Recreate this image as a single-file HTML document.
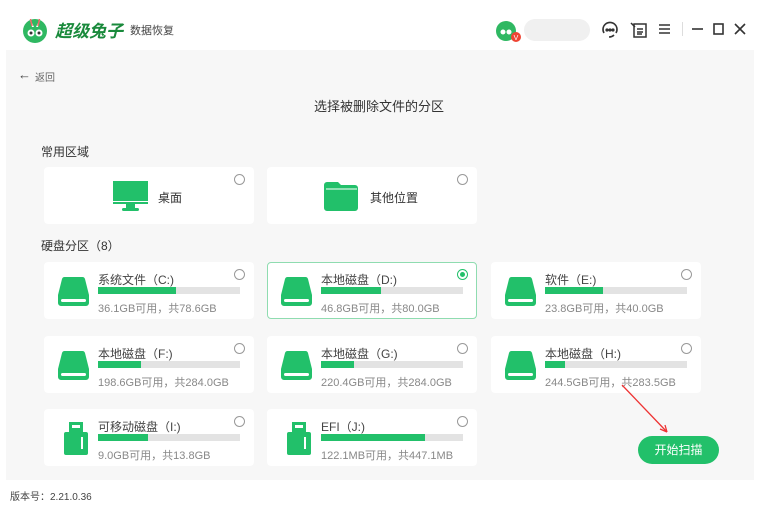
<!DOCTYPE html>
<html><head><meta charset="utf-8"><style>
*{margin:0;padding:0;box-sizing:border-box}
body{width:759px;height:522px;background:#fff;font-family:"Liberation Sans","Noto Sans CJK SC",sans-serif;position:relative;overflow:hidden;color:#333}
.abs{position:absolute}
.panel{position:absolute;left:6px;top:50px;width:748px;height:430px;background:#f7f7f7}
.card{position:absolute;width:210px;height:57px;background:#fff;border-radius:4px}
.card.sel{border:1px solid #8fdcb0}
.radio{position:absolute;right:9px;top:7px;width:11px;height:11px;border:1px solid #999;border-radius:50%}
.sel .radio{border-color:#22c06a}
.sel .radio:after{content:"";position:absolute;left:2px;top:2px;width:5px;height:5px;border-radius:50%;background:#22c06a}
.nm{position:absolute;left:54px;top:9px;font-size:12px;color:#444}
.bar{position:absolute;left:54px;top:25px;width:142px;height:7px;background:#e3e3e3}
.bar i{display:block;height:100%;background:#22c06a}
.sz{position:absolute;left:54px;top:38px;font-size:11px;color:#888}
.ic{position:absolute;left:13px;top:15px}
</style></head><body>
<svg class="abs" style="left:20px;top:14px" width="30" height="30" viewBox="0 0 30 30"><circle cx="15" cy="17" r="12" fill="#2fb862"/><path d="M9 3 L12 13 L14 13 Z M21 3 L18 13 L16 13Z" fill="#fff"/><path d="M10.5 5 L12 12 M19.5 5 L18 12" stroke="#e66" stroke-width="1.5"/><circle cx="11" cy="19" r="3.5" fill="#fff"/><circle cx="19" cy="19" r="3.5" fill="#fff"/><circle cx="11" cy="19" r="1.5" fill="#333"/><circle cx="19" cy="19" r="1.5" fill="#333"/></svg>
<div class="abs" style="left:55px;top:17px;font-size:17px;font-weight:bold;color:#1a8a3c;font-style:italic">超级兔子</div>
<div class="abs" style="left:130px;top:22px;font-size:11px;color:#444">数据恢复</div>
<svg class="abs" style="left:495px;top:19px" width="28" height="24" viewBox="0 0 28 24"><circle cx="11" cy="12" r="10" fill="#2fb862"/><circle cx="8" cy="13" r="2.5" fill="#fff"/><circle cx="14" cy="13" r="2.5" fill="#fff"/><circle cx="21" cy="18" r="5" fill="#e43"/><text x="21" y="21" font-size="7" fill="#fff" text-anchor="middle" font-family="Liberation Sans">V</text></svg>
<div class="abs" style="left:524px;top:19px;width:66px;height:22px;background:#f0f0f0;border-radius:11px"></div>
<svg class="abs" style="left:600px;top:20px;" width="20" height="20" viewBox="0 0 20 20" fill="none" stroke="#333" stroke-width="1.6"><path d="M4 13 A7 7 0 1 1 16 13"/><circle cx="7" cy="10" r=".8" fill="#333"/><circle cx="10" cy="10" r=".8" fill="#333"/><circle cx="13" cy="10" r=".8" fill="#333"/><path d="M14 15 Q12 17 9 17"/></svg>
<svg class="abs" style="left:629px;top:20px;" width="20" height="20" viewBox="0 0 20 20" fill="none" stroke="#333" stroke-width="1.5"><rect x="5" y="4" width="12" height="13"/><path d="M2 3 L6 7 M8 9h6M8 12h6M8 14h5"/></svg>
<svg class="abs" style="left:657px;top:21px;" width="16" height="16" viewBox="0 0 16 16" stroke="#333" stroke-width="1.5"><path d="M2 4h11M2 8h11M2 12h11"/></svg>
<div class="abs" style="left:682px;top:22px;width:1px;height:14px;background:#ddd"></div>
<svg class="abs" style="left:690px;top:20px;" width="60" height="18" viewBox="0 0 60 18" fill="none" stroke="#333" stroke-width="1.6"><path d="M2 9h11"/><rect x="24" y="4" width="9" height="10"/><path d="M45 4l10 10M55 4L45 14"/></svg>
<div class="panel"></div>
<div class="abs" style="left:18px;top:67px;font-size:13px;color:#444">&#8592;</div>
<div class="abs" style="left:35px;top:69px;font-size:10px;color:#666">返回</div>
<div class="abs" style="left:314px;top:96px;font-size:13px;color:#333">选择被删除文件的分区</div>
<div class="abs" style="left:41px;top:143px;font-size:12px;color:#333">常用区域</div>
<div class="card" style="left:44px;top:167px"><svg class="abs" style="left:69px;top:14px" width="36" height="31" viewBox="0 0 36 31"><rect x="0" y="0" width="35" height="23" fill="#22c06a"/><rect x="0" y="20" width="35" height="1" fill="#fff"/><rect x="13" y="23" width="9" height="4" fill="#22c06a"/><rect x="9" y="27" width="17" height="3" rx="1.5" fill="#22c06a"/></svg><div class="abs" style="left:114px;top:22px;font-size:12px">桌面</div><div class="radio"></div></div>
<div class="card" style="left:267px;top:167px"><svg class="abs" style="left:57px;top:13px" width="36" height="31" viewBox="0 0 36 31"><path d="M3 2h11l3 3h14a3 3 0 0 1 3 3v20a3 3 0 0 1-3 3H3a3 3 0 0 1-3-3V5a3 3 0 0 1 3-3z" fill="#22c06a"/><path d="M2 9h31" stroke="#fff" stroke-width="1"/></svg><div class="abs" style="left:103px;top:22px;font-size:12px">其他位置</div><div class="radio"></div></div>
<div class="abs" style="left:41px;top:237px;font-size:12px;color:#333">硬盘分区（8）</div>

<div class="card" style="left:44px;top:262px"><svg class="ic" width="33" height="29" viewBox="0 0 33 29"><path d="M8 0h17a3 3 0 0 1 3 2l4 16v8a3 3 0 0 1-3 3H4a3 3 0 0 1-3-3v-8l4-16a3 3 0 0 1 3-2z" fill="#22c06a"/><rect x="4" y="22" width="25" height="3" rx="1.5" fill="#fff"/></svg><div class="nm">系统文件（C:)</div><div class="bar"><i style="width:55%"></i></div><div class="sz">36.1GB可用，共78.6GB</div><div class="radio"></div></div>
<div class="card sel" style="left:267px;top:262px"><svg class="ic" style="left:12px;top:14px" width="33" height="29" viewBox="0 0 33 29"><path d="M8 0h17a3 3 0 0 1 3 2l4 16v8a3 3 0 0 1-3 3H4a3 3 0 0 1-3-3v-8l4-16a3 3 0 0 1 3-2z" fill="#22c06a"/><rect x="4" y="22" width="25" height="3" rx="1.5" fill="#fff"/></svg><div class="nm" style="left:53px;top:8px">本地磁盘（D:)</div><div class="bar" style="left:53px;top:24px"><i style="width:42%"></i></div><div class="sz" style="left:53px;top:37px">46.8GB可用，共80.0GB</div><div class="radio" style="right:8px;top:6px"></div></div>
<div class="card" style="left:491px;top:262px"><svg class="ic" width="33" height="29" viewBox="0 0 33 29"><path d="M8 0h17a3 3 0 0 1 3 2l4 16v8a3 3 0 0 1-3 3H4a3 3 0 0 1-3-3v-8l4-16a3 3 0 0 1 3-2z" fill="#22c06a"/><rect x="4" y="22" width="25" height="3" rx="1.5" fill="#fff"/></svg><div class="nm">软件（E:)</div><div class="bar"><i style="width:41%"></i></div><div class="sz">23.8GB可用，共40.0GB</div><div class="radio"></div></div>

<div class="card" style="left:44px;top:336px"><svg class="ic" width="33" height="29" viewBox="0 0 33 29"><path d="M8 0h17a3 3 0 0 1 3 2l4 16v8a3 3 0 0 1-3 3H4a3 3 0 0 1-3-3v-8l4-16a3 3 0 0 1 3-2z" fill="#22c06a"/><rect x="4" y="22" width="25" height="3" rx="1.5" fill="#fff"/></svg><div class="nm">本地磁盘（F:)</div><div class="bar"><i style="width:30%"></i></div><div class="sz">198.6GB可用，共284.0GB</div><div class="radio"></div></div>
<div class="card" style="left:267px;top:336px"><svg class="ic" width="33" height="29" viewBox="0 0 33 29"><path d="M8 0h17a3 3 0 0 1 3 2l4 16v8a3 3 0 0 1-3 3H4a3 3 0 0 1-3-3v-8l4-16a3 3 0 0 1 3-2z" fill="#22c06a"/><rect x="4" y="22" width="25" height="3" rx="1.5" fill="#fff"/></svg><div class="nm">本地磁盘（G:)</div><div class="bar"><i style="width:23%"></i></div><div class="sz">220.4GB可用，共284.0GB</div><div class="radio"></div></div>
<div class="card" style="left:491px;top:336px"><svg class="ic" width="33" height="29" viewBox="0 0 33 29"><path d="M8 0h17a3 3 0 0 1 3 2l4 16v8a3 3 0 0 1-3 3H4a3 3 0 0 1-3-3v-8l4-16a3 3 0 0 1 3-2z" fill="#22c06a"/><rect x="4" y="22" width="25" height="3" rx="1.5" fill="#fff"/></svg><div class="nm">本地磁盘（H:)</div><div class="bar"><i style="width:14%"></i></div><div class="sz">244.5GB可用，共283.5GB</div><div class="radio"></div></div>

<div class="card" style="left:44px;top:409px"><svg class="ic" style="left:20px;top:13px" width="24" height="33" viewBox="0 0 24 33"><rect x="5" y="0" width="14" height="10" fill="#22c06a"/><rect x="8" y="3" width="8" height="3" fill="#fff"/><rect x="0" y="10" width="24" height="23" rx="2" fill="#22c06a"/><rect x="17" y="15" width="2" height="12" fill="#fff"/></svg><div class="nm">可移动磁盘（I:)</div><div class="bar"><i style="width:35%"></i></div><div class="sz">9.0GB可用，共13.8GB</div><div class="radio"></div></div>
<div class="card" style="left:267px;top:409px"><svg class="ic" style="left:20px;top:13px" width="24" height="33" viewBox="0 0 24 33"><rect x="5" y="0" width="14" height="10" fill="#22c06a"/><rect x="8" y="3" width="8" height="3" fill="#fff"/><rect x="0" y="10" width="24" height="23" rx="2" fill="#22c06a"/><rect x="17" y="15" width="2" height="12" fill="#fff"/></svg><div class="nm">EFI（J:)</div><div class="bar"><i style="width:73%"></i></div><div class="sz">122.1MB可用，共447.1MB</div><div class="radio"></div></div>

<div class="abs" style="left:638px;top:436px;width:81px;height:28px;border-radius:14px;background:#22c06a;color:#fff;font-size:12px;line-height:28px;text-align:center">开始扫描</div>
<svg class="abs" style="left:0;top:0" width="759" height="522"><path d="M622 385 L667 432" stroke="#e33" stroke-width="1.3"/><path d="M667 432 L660 429 M667 432 L665 425" stroke="#e33" stroke-width="1.3"/></svg>
<div class="abs" style="left:10px;top:488px;font-size:10px;color:#444">版本号：2.21.0.36</div>
</body></html>
